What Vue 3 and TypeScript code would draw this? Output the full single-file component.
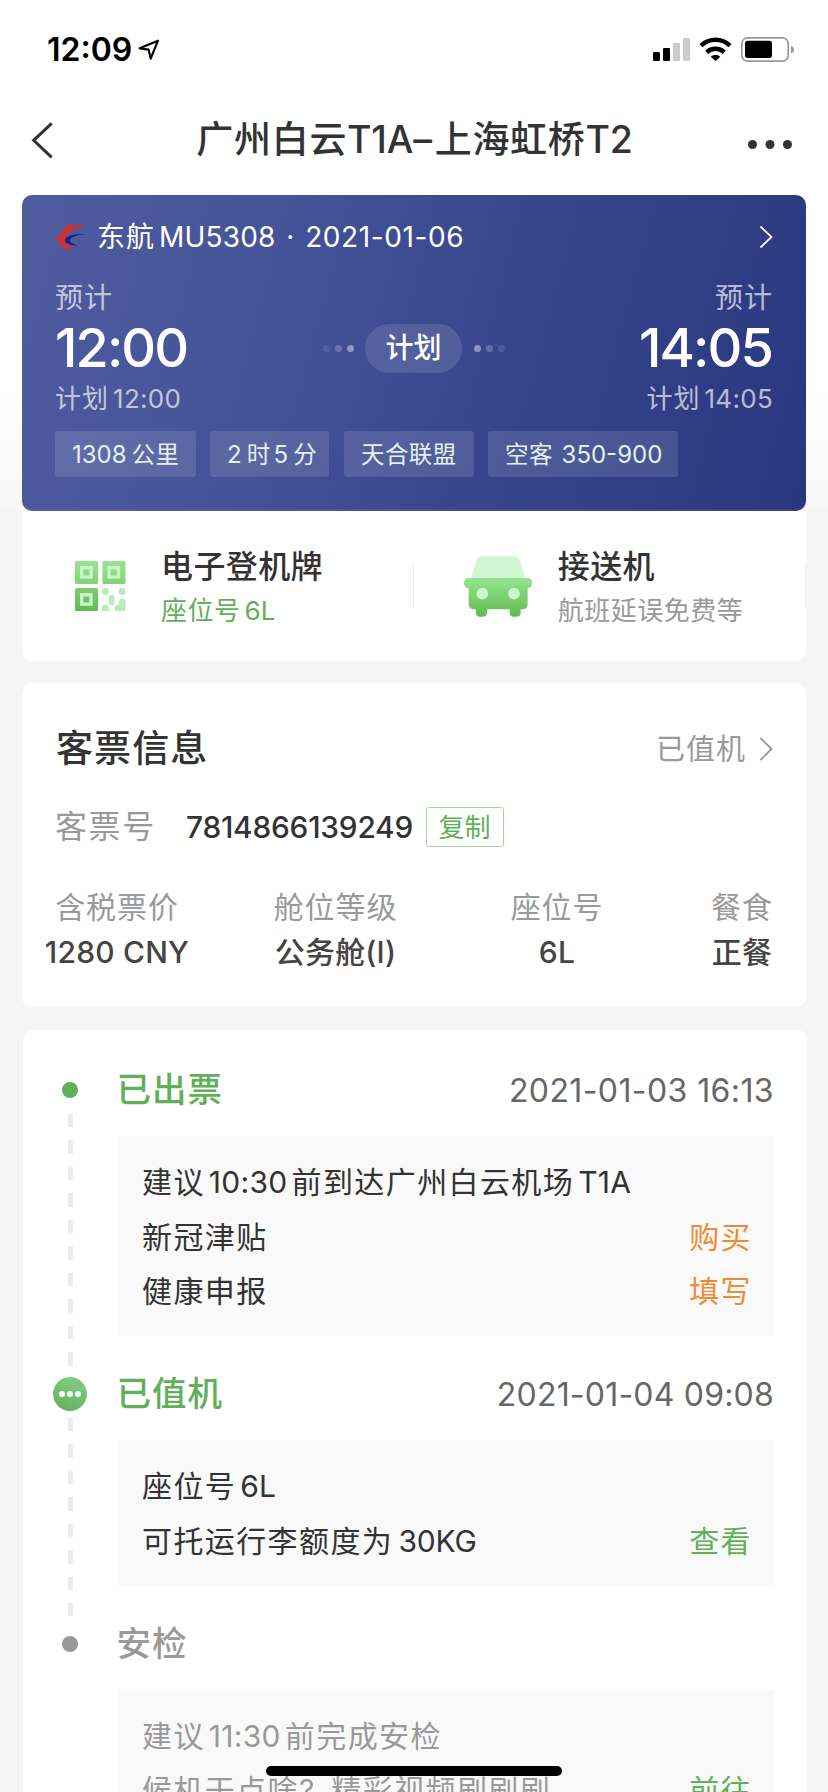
<script setup lang="ts">
interface Segment { text: string; kind: 'han' | 'latin' | 'mark' }
interface Line { text: string; action?: string; tone?: 'orange' | 'green' }
interface Step { title: string; time?: string; state: 'done' | 'active' | 'todo'; lines: Line[] }

const tags = ['1308公里', '2时5分', '天合联盟', '空客 350-900']

const fares = [
  { label: '含税票价', value: '1280 CNY' },
  { label: '舱位等级', value: '公务舱(I)' },
  { label: '座位号', value: '6L' },
  { label: '餐食', value: '正餐' },
]

const steps: Step[] = [
  {
    title: '已出票', time: '2021-01-03 16:13', state: 'done',
    lines: [
      { text: '建议10:30前到达广州白云机场T1A' },
      { text: '新冠津贴', action: '购买', tone: 'orange' },
      { text: '健康申报', action: '填写', tone: 'orange' },
    ],
  },
  {
    title: '已值机', time: '2021-01-04 09:08', state: 'active',
    lines: [
      { text: '座位号6L' },
      { text: '可托运行李额度为 30KG', action: '查看', tone: 'green' },
    ],
  },
  {
    title: '安检', state: 'todo',
    lines: [
      { text: '建议11:30前完成安检' },
      { text: '候机干点啥?精彩视频刷刷刷', action: '前往', tone: 'green' },
    ],
  },
]

// Splits mixed text so Han and Latin runs can be sized and spaced separately.
function split(text: string): Segment[] {
  const runs = text.match(/[\u4e00-\u9fff]+|[^\u4e00-\u9fff]+/g) ?? []
  return runs.map((run) => ({
    text: run,
    kind: /[\u4e00-\u9fff]/.test(run) ? 'han' : run === '?' ? 'mark' : 'latin',
  }))
}
</script>

<template>
  <div class="page">
    <div class="status">
      <div class="clock">
        <span>12:09</span>
        <svg class="locate" viewBox="412 115 72 70"><path d="M475 123 420 146 447 150 453 177Z" /></svg>
      </div>
      <svg class="signals" viewBox="714 108 429 81">
        <rect x="717" y="156" width="21" height="27" rx="4" />
        <rect x="747" y="144" width="21" height="39" rx="4" />
        <rect x="777" y="129" width="21" height="54" rx="4" fill="#ccc" />
        <rect x="807" y="114" width="21" height="69" rx="4" fill="#ccc" />
        <path d="M861 137A62 62 0 0 1 948 137M878 157A38 38 0 0 1 931 157" fill="none" stroke="#000" stroke-width="13" />
        <path d="M890 170Q905 158 919 170L905 183Z" />
        <rect x="983.500" y="113.500" width="139" height="70" rx="17" fill="none" stroke="#999" stroke-width="5" />
        <rect x="993" y="122" width="81" height="52" rx="8" />
        <path d="M1131 138Q1140 141 1140 149T1131 160Z" fill="#999" />
      </svg>
    </div>

    <header class="nav">
      <svg class="back" viewBox="94 362 68 116"><path d="M156 369 102 420 156 471" /></svg>
      <h1 class="route"><span class="han">广州白云</span><span class="t1">T1A–</span><span class="han to">上海虹桥</span><span class="t2">T2</span></h1>
      <svg class="more" viewBox="0 0 44 9"><circle cx="4.500" cy="4.500" r="4.500" /><circle cx="22" cy="4.500" r="4.500" /><circle cx="39.500" cy="4.500" r="4.500" /></svg>
    </header>

    <section class="flight">
      <div class="carrier">
        <svg class="logo" viewBox="165 105 93 80">
          <path fill="#d0302c" d="M253 107H204Q190 118 177 143H166Q171 155 179 165 189 178 201 183L222 181Q197 171 195 154 198 134 223 120 238 113 253 107Z" />
          <path fill="#201f7c" d="M257 135Q222 134 207 141 192 149 195 157 201 169 235 170 209 163 209 153 214 139 257 135Z" />
        </svg>
        <span class="airline">东航</span><span class="number">MU5308</span><span class="dot">·</span><span class="date">2021-01-06</span>
        <svg class="chevron" viewBox="0 0 14 24"><path d="M1.500 1.500 12.500 12 1.500 22.500" /></svg>
      </div>
      <div class="times">
        <div class="time">
          <div class="expect">预计</div>
          <div class="clock-big">12:00</div>
          <div class="planned"><span class="han">计划</span><span class="latin">12:00</span></div>
        </div>
        <div class="plan">
          <span class="trail"><i></i><i></i><i></i></span>
          <span class="pill">计划</span>
          <span class="trail reverse"><i></i><i></i><i></i></span>
        </div>
        <div class="time arrive">
          <div class="expect">预计</div>
          <div class="clock-big">14:05</div>
          <div class="planned"><span class="han">计划</span><span class="latin">14:05</span></div>
        </div>
      </div>
      <div class="tags">
        <span v-for="tag in tags" :key="tag" class="tag"><span v-for="(s, i) in split(tag)" :key="i" :class="s.kind">{{ s.text }}</span></span>
      </div>
    </section>

    <section class="services">
      <div class="service">
        <svg class="qr" viewBox="225 183 151 151">
          <defs>
            <linearGradient id="qrTop" x2="0" y2="1"><stop stop-color="#98e48e" /><stop offset="1" stop-color="#80d474" /></linearGradient>
            <linearGradient id="qrLow" x2="0" y2="1"><stop stop-color="#7bcd6e" /><stop offset="1" stop-color="#63b955" /></linearGradient>
          </defs>
          <rect x="225" y="183" width="69" height="69" rx="5" fill="url(#qrTop)" />
          <rect x="307" y="183" width="69" height="69" rx="5" fill="url(#qrTop)" />
          <rect x="225" y="264" width="69" height="69" rx="5" fill="url(#qrLow)" />
          <g fill="none" stroke="#cdf3ca" stroke-width="10">
            <rect x="245" y="203" width="28" height="28" /><rect x="327" y="203" width="28" height="28" /><rect x="245" y="284" width="28" height="28" />
          </g>
          <g fill="#bde9bb">
            <rect x="306" y="264" width="20" height="20" rx="7" /><rect x="356" y="264" width="20" height="20" rx="7" />
            <rect x="326" y="284" width="17" height="31" rx="8" /><rect x="306" y="314" width="20" height="20" rx="7" />
            <path d="M365 296H369Q376 296 376 304V326Q376 334 368 334H351Q343 334 343 324T353 314Q357 314 357 308V304Q357 296 365 296Z" />
          </g>
        </svg>
        <div class="service-text">
          <div class="service-name">电子登机牌</div>
          <div class="service-note green"><span>座位号</span><span class="seat">6L</span></div>
        </div>
      </div>
      <div class="service ride">
        <svg class="car" viewBox="150 166 205 183">
          <defs><linearGradient id="carBody" gradientUnits="userSpaceOnUse" x1="0" y1="232" x2="0" y2="348"><stop stop-color="#95e48d" /><stop offset="1" stop-color="#63ba54" /></linearGradient></defs>
          <path fill="#d0f5d1" d="M170 233 188 179Q192 167 204 167H300Q312 167 317 179L334 233Z" />
          <path fill="url(#carBody)" d="M164 232H341Q354 232 354 247T341 262V310Q341 326 325 326H320V336Q320 348 308 348H299Q287 348 287 336V326H219V336Q219 348 207 348H198Q186 348 186 336V326H180Q164 326 164 310V262Q150 262 150 247T164 232Z" />
          <circle cx="205" cy="279" r="17.500" fill="#d0f5d1" /><circle cx="300" cy="279" r="17.500" fill="#d0f5d1" />
        </svg>
        <div class="service-text">
          <div class="service-name">接送机</div>
          <div class="service-note">航班延误免费等</div>
        </div>
      </div>
    </section>

    <section class="ticket">
      <div class="ticket-head">
        <h2>客票信息</h2>
        <span class="checked">已值机</span>
        <svg class="chevron" viewBox="0 0 14 24"><path d="M1.500 1 12.500 12 1.500 23" /></svg>
      </div>
      <div class="ticket-no">
        <span class="no-label">客票号</span><span class="no-value">7814866139249</span><button class="copy" type="button">复制</button>
      </div>
      <div class="fares">
        <div v-for="fare in fares" :key="fare.label" class="fare">
          <div class="fare-label">{{ fare.label }}</div>
          <div class="fare-value">{{ fare.value }}</div>
        </div>
      </div>
    </section>

    <section class="timeline">
      <div v-for="(step, n) in steps" :key="step.title" class="step" :class="step.state">
        <div class="rail">
          <div class="node"><span class="bead"><template v-if="step.state === 'active'"><i></i><i></i><i></i></template></span></div>
          <div v-if="n < steps.length - 1" class="dashes"></div>
        </div>
        <div class="detail">
          <div class="step-head"><span class="step-title">{{ step.title }}</span><span class="step-time">{{ step.time }}</span></div>
          <div class="box">
            <div v-for="line in step.lines" :key="line.text" class="line">
              <span class="mixed"><span v-for="(s, i) in split(line.text)" :key="i" :class="s.kind">{{ s.text }}</span></span>
              <span v-if="line.action" class="action" :class="line.tone">{{ line.action }}</span>
            </div>
          </div>
        </div>
      </div>
    </section>
    <div class="home-bar"></div>
  </div>
</template>

<style>
body { margin: 0; background: #f5f5f5; }
</style>

<style scoped>
.page {
  position: relative; box-sizing: border-box; width: 828px; height: 1792px; overflow: hidden;
  background: linear-gradient(#fff 0, #fff 390px, #f7f7f8 510px, #f5f5f5 511px);
  font-family: Inter, "Noto Sans CJK SC", sans-serif; color: #333; white-space: pre;
}
h1, h2 { margin: 0; font-weight: 500; }
svg { display: block; flex: none; }

.status { display: flex; justify-content: space-between; align-items: center; height: 99px; padding: 0 33px 0 47px; }
.clock { display: flex; align-items: center; color: #000; font-size: 32px; font-weight: 600; line-height: 40px; }
.locate { width: 24px; height: 23.300px; margin-left: 5px; fill: none; stroke: #000; stroke-width: 6.500; stroke-linejoin: round; }
.signals { width: 143px; height: 27px; }

.nav { display: grid; grid-template-columns: 1fr auto 1fr; align-items: center; height: 82px; padding: 0 36px 0 31px; }
.back { width: 22.700px; height: 38.700px; fill: none; stroke: #333; stroke-width: 9; }
.route { display: flex; align-items: baseline; margin-left: 6px; font-size: 37.500px; line-height: 50px; letter-spacing: -.2px; }
.route .han { font-size: 37px; letter-spacing: .7px; }
.route .to { margin-left: 3px; }
.more { justify-self: end; width: 44px; height: 9px; margin-top: 9px; fill: #333; }

.flight {
  box-sizing: border-box; height: 316px; margin: 14px 22px 0; padding: 18px 33px 0; border-radius: 10px; color: #fff;
  background: linear-gradient(105deg, #4f5d9f 0%, #445297 33%, #35448a 66%, #28377f 100%);
  box-shadow: inset 0 -2px 0 rgba(255, 255, 255, .06);
}
.carrier { display: flex; align-items: center; height: 48px; font-size: 28px; line-height: 48px; }
.logo { width: 31px; height: 26.700px; margin-right: 11px; }
.airline { letter-spacing: 1px; }
.number { margin-left: 4px; letter-spacing: .2px; }
.dot { width: 29.500px; text-align: center; }
.date { letter-spacing: .6px; }
.chevron { width: 14px; height: 24px; margin-left: auto; fill: none; stroke: currentColor; stroke-width: 1.800; }
.times { display: flex; justify-content: space-between; align-items: center; margin-top: 17px; }
.time { width: 160px; }
.expect { color: rgba(255, 255, 255, .68); font-size: 28px; line-height: 40px; letter-spacing: 1px; }
.clock-big { font-size: 54px; font-weight: 500; line-height: 60px; letter-spacing: -1.900px; }
.planned { display: flex; align-items: baseline; color: rgba(255, 255, 255, .68); font-size: 26px; line-height: 42px; }
.planned .han { letter-spacing: 1px; }
.planned .latin { margin-left: 4px; letter-spacing: .3px; }
.arrive { text-align: right; }
.arrive .clock-big { margin-right: 1px; }
.arrive .planned { justify-content: flex-end; }
.plan { display: flex; align-items: center; margin-top: -1px; }
.pill { width: 97px; height: 49px; border-radius: 25px; background: rgba(255, 255, 255, .12); font-size: 28px; font-weight: 500; line-height: 49px; text-align: center; }
.trail { display: flex; gap: 5px; margin: 0 11px 0 0; }
.trail i { width: 7px; height: 7px; border-radius: 50%; background: #fff; opacity: .42; }
.trail i:nth-child(1) { opacity: .1; }
.trail i:nth-child(2) { opacity: .22; }
.reverse { flex-direction: row-reverse; margin: 0 0 0 12px; }
.tags { display: flex; gap: 14px; margin-top: 11px; }
.tag { display: flex; align-items: baseline; box-sizing: border-box; width: 141px; height: 46px; padding-left: 17px; border-radius: 3px; background: rgba(255, 255, 255, .12); color: #e5efee; font-size: 24px; line-height: 48px; }
.tag:nth-child(2) { width: 119px; }
.tag:nth-child(3) { width: 130px; margin-left: 1px; }
.tag:nth-child(4) { width: 190px; }
.tag .han { font-size: 23.500px; letter-spacing: .4px; }
.tag .han + .latin { margin-left: 3px; }
.tag .latin + .han { margin-left: 5px; }
.tag:last-child .han + .latin { margin-left: 2px; }

.services { display: flex; height: 150px; margin: 0 22px; border-radius: 0 0 10px 10px; background: #fff; }
.service {
  display: flex; align-items: center; box-sizing: border-box; width: 392px; padding-left: 53px;
  background: linear-gradient(#eee, #eee) 100% 53px / 1px 44px no-repeat;
}
.ride { padding-left: 50px; }
.qr { width: 50.500px; height: 50.500px; margin-right: 35.500px; }
.car { width: 68.300px; height: 61px; margin-right: 25.500px; }
.service-text { padding-top: 5px; }
.service-name { font-size: 32px; font-weight: 500; line-height: 44px; letter-spacing: .4px; }
.service-note { color: #999; font-size: 26px; line-height: 43px; letter-spacing: .5px; }
.service-note.green { color: #5fb058; }
.seat { margin-left: 4px; letter-spacing: 0; }

.ticket { box-sizing: border-box; height: 324px; margin: 22px 22px 0; padding-top: 36px; border-radius: 10px; background: #fff; }
.ticket-head { display: flex; align-items: center; height: 60px; padding: 0 33px; color: #999; }
h2 { margin-left: 1px; color: #333; font-size: 37px; line-height: 60px; letter-spacing: 1.100px; }
.checked { margin-left: auto; padding-top: 2px; font-size: 29px; line-height: 60px; letter-spacing: 1px; }
.ticket-head .chevron { margin-left: 13px; }
.ticket-no { display: flex; align-items: center; height: 40px; margin-top: 28px; padding-left: 33px; line-height: 40px; }
.no-label { width: 131px; color: #999; font-size: 32px; letter-spacing: 1.600px; }
.no-value { width: 239.500px; font-size: 29.800px; font-weight: 500; letter-spacing: -.2px; }
.copy { box-sizing: border-box; width: 78px; height: 40px; padding: 0; border: 1px solid #a5d5a2; border-radius: 3px; background: none; color: #5fb058; font: 26px/37px Inter, "Noto Sans CJK SC", sans-serif; }
.fares { display: grid; grid-template-columns: 189px 248px 195px 152px; margin-top: 37px; text-align: center; font-size: 30px; }
.fare:last-child { padding-left: 23px; }
.fare-label { padding-left: 1px; color: #999; line-height: 46px; letter-spacing: .900px; }
.fare-value { padding-left: 1px; color: #444; font-weight: 500; line-height: 44px; letter-spacing: .2px; }

.timeline { height: 800px; margin: 23px 21px 0 23px; padding-top: 30px; box-sizing: border-box; border-radius: 10px; background: #fff; }
.step { display: flex; }
.rail { display: flex; flex-direction: column; align-items: center; width: 95px; }
.node, .dashes { margin-right: 1px; }
.node { display: flex; align-items: center; height: 60px; }
.bead { display: flex; align-items: center; justify-content: center; gap: 2px; width: 16px; height: 16px; border-radius: 50%; background: #5fb058; }
.todo .bead { background: #999; }
.active .bead { width: 34px; height: 34px; background: linear-gradient(200deg, #85cf88, #61b059); }
.bead i { width: 6px; height: 6px; border-radius: 50%; background: #fff; }
.dashes { flex: 1; width: 5px; margin-right: 0; margin-top: -6px; margin-bottom: -2px; background: repeating-linear-gradient(#ececec 0 13.300px, transparent 13.300px 26.500px); }
.detail { width: 656px; padding-bottom: 28.500px; }
.step-head { display: flex; justify-content: space-between; align-items: baseline; height: 60px; line-height: 60px; }
.step-title { margin-left: -1.500px; color: #5fb058; font-size: 34.500px; font-weight: 500; letter-spacing: 1px; }
.step-time { color: #666; font-size: 32px; letter-spacing: .4px; }
.active .step-time { letter-spacing: .2px; }
.box { margin-top: 16px; padding: 19px 22px 17px 24px; background: #f9f9f9; }
.line { display: flex; justify-content: space-between; height: 54.500px; font-size: 30px; line-height: 54.500px; }
.mixed { display: flex; }
.mixed .han, .action { letter-spacing: 1.400px; }
.mixed .latin { letter-spacing: .3px; }
.mixed .latin + .han, .mixed .han + .latin { margin-left: 4px; }
.active .line:last-child .latin { margin-left: -3px; letter-spacing: -.2px; }
.mixed .mark { margin-right: 17px; }
.orange { color: #f08a35; }
.green { color: #5fb058; }
.todo .step-title, .todo .mixed { color: #999; }

.home-bar { position: absolute; left: 266px; top: 1766px; width: 296px; height: 10px; border-radius: 5px; background: #000; }
</style>
